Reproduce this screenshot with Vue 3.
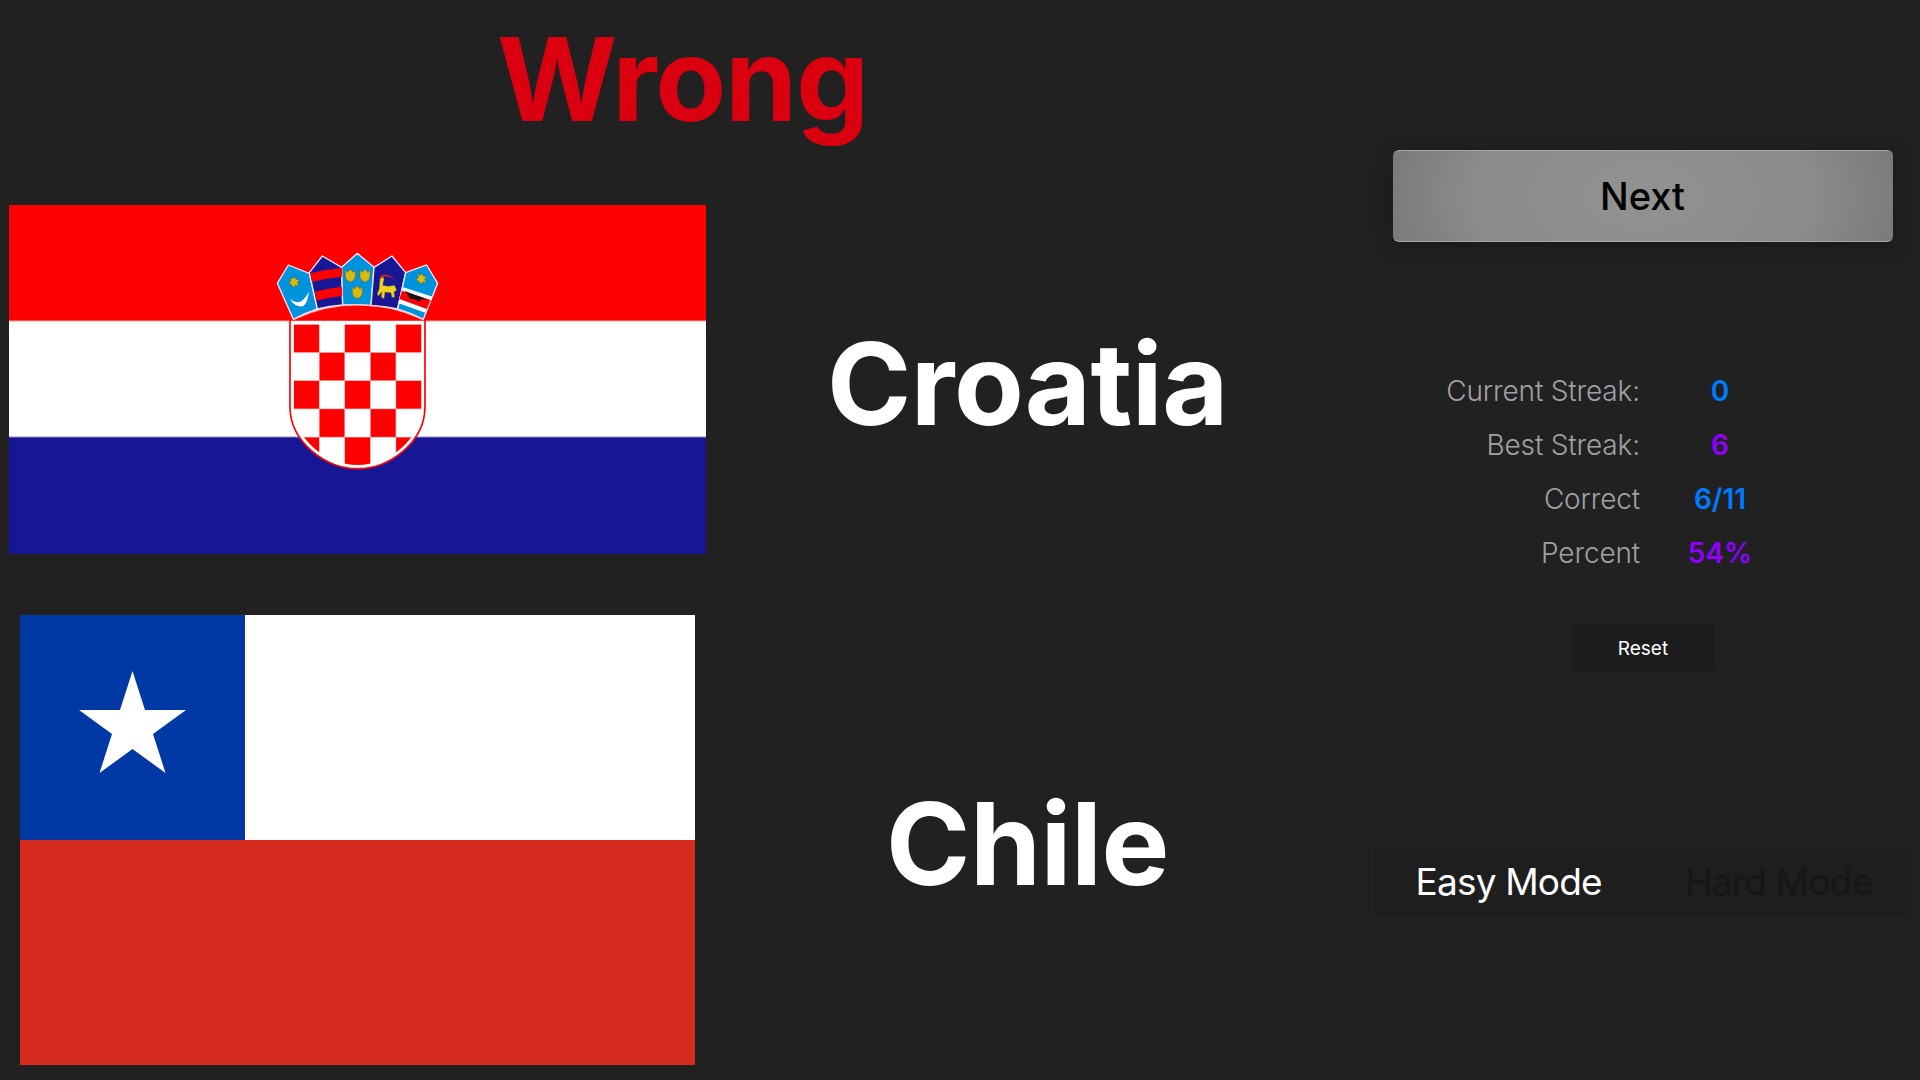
<script setup>
const stats = [
  { label: 'Current Streak:', value: '0', tone: 'blue' },
  { label: 'Best Streak:', value: '6', tone: 'purple' },
  { label: 'Correct', value: '6/11', tone: 'blue' },
  { label: 'Percent', value: '54%', tone: 'purple' }
]
const squares = []
for (let r = 0; r < 5; r++) {
  for (let c = 0; c < 5; c++) {
    if ((r + c) % 2 === 0) squares.push({ x: 71 + c * 76.7, y: 43 + r * 84.6 })
  }
}
const crests = [
  { x: 271, y: 105 },
  { x: 315, y: 105 },
  { x: 292, y: 155 }
]
</script>

<template>
  <div class="page">
    <section class="quiz">
      <h1 class="verdict">Wrong</h1>
      <div class="row first">
        <div class="flag-cell">
          <svg class="flag" width="697" height="349" viewBox="0 0 697 349">
            <rect width="697" height="116" fill="#ff0000" />
            <rect y="116" width="697" height="117" fill="#ffffff" />
            <rect y="232" width="697" height="117" fill="#171796" />
            <rect y="115.5" width="697" height="1" fill="#ffa4a4" />
            <rect y="231.4" width="697" height="1" fill="#a3a3d0" />
            <g transform="translate(261 105) scale(0.3333)">
              <defs>
                <clipPath id="inner">
                  <path d="M71 43H455V290C455 385 360 465 263 465C166 465 71 385 71 290Z" />
                </clipPath>
              </defs>
              <path d="M60 30H465V290C465 395 360 476 263 476C166 476 60 395 60 290Z" fill="#ffffff" stroke="#ff0000" stroke-width="5" />
              <g clip-path="url(#inner)">
                <rect v-for="s in squares" :key="s.x + '-' + s.y" :x="s.x" :y="s.y" width="76.7" height="84.6" fill="#ff0000" stroke="#ffb0b0" stroke-width="1.5" />
              </g>
            </g>
            <g transform="translate(251 35) scale(0.3333)" stroke-linejoin="round">
              <path d="M52 130L85 75L148 100L172 207Q133 220 100 238Z" fill="#0093dd" stroke="#e8e8ff" stroke-width="4" />
              <path d="M148 98L187 48L245 82L248 195Q208 198 172 207Z" fill="#171796" stroke="#e8e8ff" stroke-width="4" />
              <path d="M245 82L292 40L342 82L333 197Q292 192 248 195Z" fill="#0093dd" stroke="#e8e8ff" stroke-width="4" />
              <path d="M342 82L396 48L437 98L413 207Q375 198 333 197Z" fill="#171796" stroke="#e8e8ff" stroke-width="4" />
              <path d="M437 98L500 75L533 130L490 238Q455 220 413 207Z" fill="#0093dd" stroke="#e8e8ff" stroke-width="4" />
              <path d="M100 238Q292 150 490 238" fill="none" stroke="#ffc4c4" stroke-width="4" />
              <path d="M150 100Q196 88 246 84L246 110Q200 114 156 126Z" fill="#ff0000" />
              <path d="M164 155Q205 144 246 140L247 168Q208 172 170 182Z" fill="#ff0000" />
              <path d="M103 110L108 118L118 120L112 128L117 138L106 136L99 143L95 134L86 130L93 123L91 113L99 116Z" fill="#d9bb12" stroke="#6f6210" stroke-width="1.5" />
              <path d="M90 176Q120 205 147 155Q140 210 112 197Q98 192 90 176Z" fill="#ffffff" />
              <path d="M485 100L490 108L500 110L494 118L499 128L488 126L481 133L477 124L468 120L475 113L473 103L481 106Z" fill="#d9bb12" stroke="#6f6210" stroke-width="1.5" />
              <path v-for="c in crests" :key="c.x + c.y" :d="`M${c.x - 15} ${c.y - 14}L${c.x - 8} ${c.y - 8}L${c.x} ${c.y - 18}L${c.x + 8} ${c.y - 8}L${c.x + 15} ${c.y - 14}V${c.y + 6}Q${c.x + 12} ${c.y + 18} ${c.x} ${c.y + 21}Q${c.x - 12} ${c.y + 18} ${c.x - 15} ${c.y + 6}Z`" fill="#d9bb12" stroke="#6f6210" stroke-width="1.5" />
              <path d="M360 118L366 108L372 116L368 136Q385 142 403 136L410 150L402 156L404 172L396 172L393 158L375 156L372 176L364 172L366 155L355 168L352 162L358 146Z" fill="#f1d21d" stroke="#8a7a10" stroke-width="1" />
              <path d="M358 110Q375 98 392 108L404 118L384 110Q370 108 362 116Z" fill="#cc2020" />
              <path d="M430 142L518 170L512 185L424 157Z" fill="#ffffff" />
              <path d="M426 152L512 180L500 207L418 178Z" fill="#ff0000" />
              <path d="M420 178L500 207L496 218L416 190Z" fill="#ffffff" />
              <path d="M434 152L452 160L468 166L486 172L502 180L484 178L478 186L466 178L450 176L444 164Z" fill="#151515" />
            </g>
          </svg>
        </div>
        <div class="name">Croatia</div>
      </div>
      <div class="row">
        <div class="flag-cell">
          <svg class="flag" width="675" height="450" viewBox="0 0 675 450">
            <rect width="675" height="225" fill="#ffffff" />
            <rect width="225" height="225" fill="#0039a6" />
            <rect y="225" width="675" height="225" fill="#d52b1e" />
            <polygon points="112.5,56 125,95 166,95 133,119 145.5,158 112.5,134 79.5,158 92,119 59,95 100,95" fill="#ffffff" />
          </svg>
        </div>
        <div class="name">Chile</div>
      </div>
    </section>

    <aside class="side">
      <button class="next">Next</button>
      <div class="stats">
        <template v-for="s in stats" :key="s.label">
          <span class="label">{{ s.label }}</span>
          <span class="value" :class="s.tone">{{ s.value }}</span>
        </template>
      </div>
      <button class="reset">Reset</button>
      <div class="mode">
        <span class="mode-opt on">Easy Mode</span>
        <span class="mode-opt">Hard Mode</span>
      </div>
    </aside>
  </div>
</template>

<style>
html, body { margin: 0; background: #212121; }
</style>

<style scoped>
.page {
  width: 1920px;
  height: 1080px;
  overflow: hidden;
  display: flex;
  background: #212121;
  font-family: Inter, "Liberation Sans", sans-serif;
}
.quiz {
  width: 1365px;
  flex: none;
  display: flex;
  flex-direction: column;
}
.verdict {
  margin: 0;
  height: 205px;
  text-align: center;
  font-size: 116px;
  line-height: 158px;
  font-weight: 700;
  letter-spacing: -1.3px;
  color: #da0010;
}
.row {
  display: flex;
  align-items: center;
}
.row.first {
  margin-bottom: 61px;
}
.flag-cell {
  width: 715px;
  flex: none;
  display: flex;
  justify-content: center;
}
.flag {
  display: block;
}
.name {
  width: 625px;
  text-align: center;
  color: #ffffff;
  font-size: 114px;
  font-weight: 700;
  letter-spacing: -0.4px;
  line-height: 130px;
  padding-top: 8px;
}
.side {
  flex: 1;
  display: flex;
  flex-direction: column;
  align-items: center;
  padding-top: 150px;
}
.next {
  width: 500px;
  height: 92px;
  flex: none;
  border: 0;
  border-top: 1px solid #a8a8a8;
  border-bottom: 1px solid #a8a8a8;
  border-radius: 6px;
  background: radial-gradient(ellipse 62% 200% at center, #929292 0%, #8b8b8b 55%, #717171 100%);
  box-shadow: 0 4px 20px rgba(0, 0, 0, 0.3);
  color: #000000;
  font: 450 38px Inter, "Liberation Sans", sans-serif;
  padding: 0;
}
.stats {
  margin-top: 122px;
  padding-right: 64px;
  display: grid;
  grid-template-columns: 194px 110px;
  column-gap: 25px;
  grid-auto-rows: 54px;
  align-items: center;
}
.label {
  justify-self: end;
  color: #a0a0a5;
  font-size: 28px;
  font-weight: 300;
  letter-spacing: -0.15px;
  white-space: nowrap;
}
.value {
  text-align: center;
  font-size: 28px;
  font-weight: 600;
}
.blue { color: #007aff; }
.purple { color: #8f00ff; }
.reset {
  margin-top: 43px;
  width: 142px;
  height: 49px;
  flex: none;
  border: 0;
  border-radius: 6px;
  background: #1c1c1e;
  color: #ffffff;
  font: 400 19px Inter, "Liberation Sans", sans-serif;
  padding: 1px 0 0 1px;
}
.mode {
  margin-top: 175px;
  width: 538px;
  height: 70px;
  flex: none;
  box-sizing: border-box;
  padding: 0 39px 2px 42px;
  border-radius: 8px;
  background: #1e1e1e;
  display: flex;
  align-items: center;
  justify-content: space-between;
}
.mode-opt {
  color: #171717;
  font-size: 37px;
  font-weight: 400;
  letter-spacing: -0.8px;
  white-space: nowrap;
}
.mode-opt.on {
  color: #ffffff;
}
</style>
